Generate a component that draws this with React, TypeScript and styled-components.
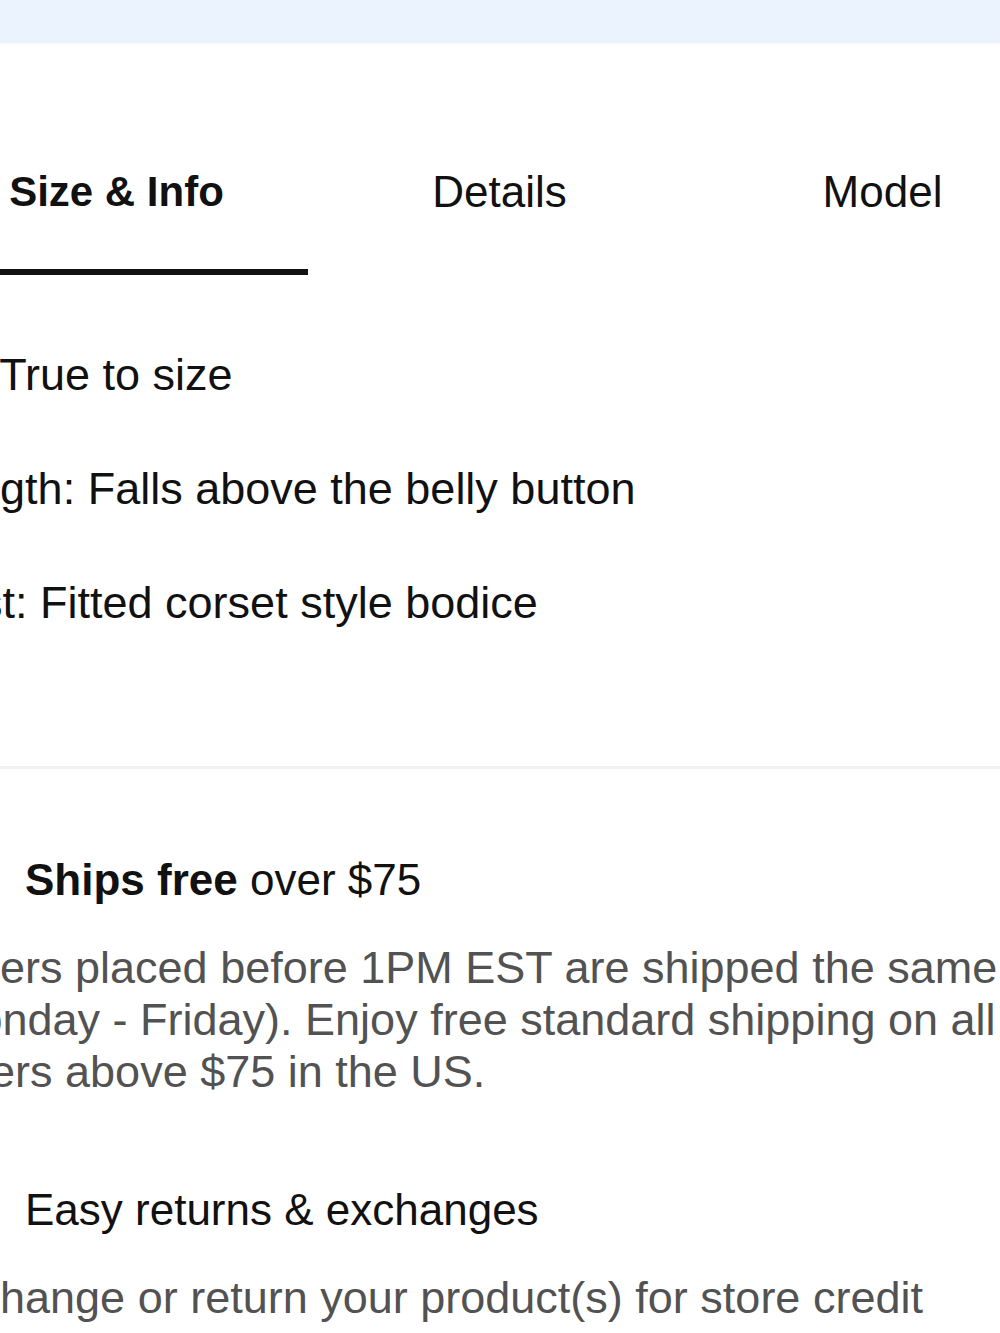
import React, { useState } from "react";
import styled, { createGlobalStyle } from "styled-components";

const Global = createGlobalStyle`
  html, body {
    margin: 0;
    padding: 0;
    background: #ffffff;
    overflow: hidden;
  }
  body {
    font-family: "Liberation Sans", Arial, sans-serif;
    color: #111111;
  }
`;

const Viewport = styled.div`
  width: 1000px;
  height: 1333px;
  overflow: hidden;
`;

const TopBar = styled.div`
  height: 43px;
  background: #ebf4fe;
  box-shadow: 0 1px 3px rgba(0, 0, 0, 0.04);
`;

const Page = styled.main`
  width: 1149px;
  margin-left: -75px;
  display: flex;
  flex-direction: column;
`;

const TabBar = styled.nav`
  display: grid;
  grid-template-columns: repeat(3, 1fr);
  padding-top: 124px;
`;

const Tab = styled.button<{ $active?: boolean }>`
  appearance: none;
  background: none;
  border: none;
  border-bottom: 6px solid ${(p) => (p.$active ? "#111111" : "transparent")};
  margin: 0;
  padding: 0 0 52px;
  font-family: "Liberation Sans", Arial, sans-serif;
  font-size: ${(p) => (p.$active ? "42px" : "44px")};
  font-weight: ${(p) => (p.$active ? 700 : 400)};
  line-height: 50px;
  color: #111111;
  text-align: center;
  cursor: pointer;
`;

const InfoList = styled.ul`
  list-style: none;
  margin: 43px 0 0;
  padding: 0;
  display: flex;
  flex-direction: column;
`;

const InfoItem = styled.li`
  font-size: 45px;
  line-height: 114px;
  color: #111111;
  white-space: nowrap;
`;

const Divider = styled.hr`
  border: none;
  height: 3px;
  background: #f1f1f1;
  margin: 106px 0 0;
`;

const Perk = styled.section<{ $gap: number }>`
  margin-top: ${(p) => p.$gap}px;
  display: flex;
  flex-direction: column;
  gap: 37px;
`;

const PerkHead = styled.div`
  display: flex;
  align-items: center;
  gap: 30px;
`;

const PerkIcon = styled.span`
  width: 70px;
  height: 50px;
  display: flex;
  align-items: center;
  justify-content: center;
  flex: none;
`;

const PerkTitle = styled.h3`
  margin: 0;
  font-size: 44px;
  line-height: 50px;
  font-weight: 400;
  color: #111111;
  white-space: nowrap;
  b {
    font-weight: 700;
  }
`;

const PerkText = styled.p`
  margin: 0;
  font-size: 45px;
  line-height: 52px;
  color: #525252;
  white-space: nowrap;
`;

const Truck = () => (
  <svg width="48" height="36" viewBox="0 0 48 36" fill="none" stroke="#111" strokeWidth="3">
    <rect x="2" y="4" width="28" height="20" />
    <path d="M30 10h9l7 7v7H30z" />
    <circle cx="12" cy="28" r="4" fill="#fff" />
    <circle cx="37" cy="28" r="4" fill="#fff" />
  </svg>
);

const Returns = () => (
  <svg width="44" height="40" viewBox="0 0 44 40" fill="none" stroke="#111" strokeWidth="3">
    <path d="M8 14a16 16 0 0 1 30 2" />
    <path d="M36 26a16 16 0 0 1-30-2" />
    <path d="M38 6v10H28" />
    <path d="M6 34V24h10" />
  </svg>
);

const tabs = ["Size & Info", "Details", "Model"];

export default function App() {
  const [active, setActive] = useState(0);
  return (
    <Viewport>
      <Global />
      <TopBar />
      <Page>
        <TabBar>
          {tabs.map((t, i) => (
            <Tab key={t} $active={i === active} onClick={() => setActive(i)}>
              {t}
            </Tab>
          ))}
        </TabBar>
        <InfoList>
          <InfoItem>Fit: True to size</InfoItem>
          <InfoItem>Length: Falls above the belly button</InfoItem>
          <InfoItem>Bust: Fitted corset style bodice</InfoItem>
        </InfoList>
        <Divider />
        <Perk $gap={86}>
          <PerkHead>
            <PerkIcon>
              <Truck />
            </PerkIcon>
            <PerkTitle>
              <b>Ships free</b> over $75
            </PerkTitle>
          </PerkHead>
          <PerkText>
            Orders placed before 1PM EST are shipped the same day
            <br />
            (Monday - Friday). Enjoy free standard shipping on all
            <br />
            orders above $75 in the US.
          </PerkText>
        </Perk>
        <Perk $gap={87}>
          <PerkHead>
            <PerkIcon>
              <Returns />
            </PerkIcon>
            <PerkTitle>Easy returns &amp; exchanges</PerkTitle>
          </PerkHead>
          <PerkText>
            Exchange or return your product(s) for store credit
            <br />
            within 30 days of delivery for a full refund.
          </PerkText>
        </Perk>
      </Page>
    </Viewport>
  );
}
